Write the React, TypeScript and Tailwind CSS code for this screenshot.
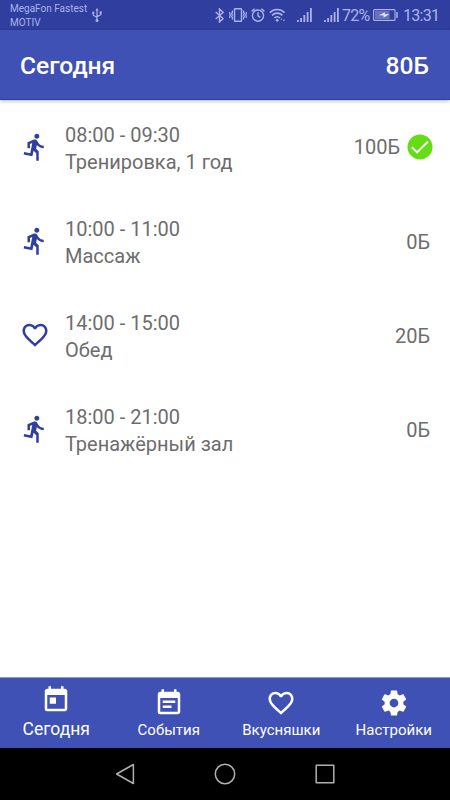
import React from 'react';
import {
  MdDirectionsRun,
  MdFavoriteBorder,
  MdToday,
  MdEventNote,
} from 'react-icons/md';

interface ScheduleItem {
  time: string;
  title: string;
  points: string;
  kind: 'sport' | 'health';
  done?: boolean;
}

const ITEMS: ScheduleItem[] = [
  { time: '08:00 - 09:30', title: 'Тренировка, 1 год', points: '100Б', kind: 'sport', done: true },
  { time: '10:00 - 11:00', title: 'Массаж', points: '0Б', kind: 'sport' },
  { time: '14:00 - 15:00', title: 'Обед', points: '20Б', kind: 'health' },
  { time: '18:00 - 21:00', title: 'Тренажёрный зал', points: '0Б', kind: 'sport' },
];

const GearIcon: React.FC<{ className?: string }> = ({ className }) => (
  <svg viewBox="0 0 24 24" className={className} fill="currentColor">
    <path d="M19.43 12.98c.04-.32.07-.64.07-.98s-.03-.66-.07-.98l2.11-1.65c.19-.15.24-.42.12-.64l-2-3.46c-.12-.22-.39-.3-.61-.22l-2.49 1c-.52-.4-1.08-.73-1.69-.98l-.38-2.65C14.46 2.18 14.25 2 14 2h-4c-.25 0-.46.18-.49.42l-.38 2.65c-.61.25-1.17.59-1.69.98l-2.49-1c-.23-.09-.49 0-.61.22l-2 3.46c-.13.22-.07.49.12.64l2.11 1.65c-.04.32-.07.65-.07.98s.03.66.07.98l-2.11 1.65c-.19.15-.24.42-.12.64l2 3.46c.12.22.39.3.61.22l2.49-1c.52.4 1.08.73 1.69.98l.38 2.65c.03.24.24.42.49.42h4c.25 0 .46-.18.49-.42l.38-2.65c.61-.25 1.17-.59 1.69-.98l2.49 1c.23.09.49 0 .61-.22l2-3.46c.12-.22.07-.49-.12-.64l-2.11-1.65zM12 15.5c-1.93 0-3.5-1.57-3.5-3.5s1.57-3.5 3.5-3.5 3.5 1.57 3.5 3.5-1.57 3.5-3.5 3.5z" />
  </svg>
);

const TABS = [
  { label: 'Сегодня', icon: MdToday, active: true },
  { label: 'События', icon: MdEventNote, active: false },
  { label: 'Вкусняшки', icon: MdFavoriteBorder, active: false },
  { label: 'Настройки', icon: GearIcon, active: false },
];

const SignalIcon: React.FC<{ className?: string }> = ({ className }) => (
  <svg viewBox="0 0 15 14" className={`w-[15px] h-3.5 shrink-0 ${className ?? ''}`} fill="currentColor">
    <path d="M0 12h1.8v2H0zM3.2 10H5v4H3.2zM6.4 7h1.8v7H6.4zM9.7 4h1.8v10H9.7zM13 0h1.8v14H13z" />
  </svg>
);

const StatusBar: React.FC = () => (
  <div className="h-[30px] shrink-0 bg-[#303f9f] text-[#aab3ea] flex items-center pl-2.5 pr-[11px]">
    <div className="text-[10px] leading-[14px] pt-[2px] w-[82px] whitespace-nowrap">
      <div>MegaFon Fastest</div>
      <div>MOTIV</div>
    </div>
    {/* usb */}
    <svg viewBox="0 0 10 14" className="w-2.5 h-3.5 shrink-0" fill="none" stroke="currentColor" strokeWidth="1.2">
      <path d="M5 2v10M1.3 5v2.2L5 9.6M8.7 4.5v2.2L5 8.6" />
      <path d="M5 0l1.6 2.6H3.4z" fill="currentColor" stroke="none" />
      <circle cx="5" cy="12.4" r="1.5" fill="currentColor" stroke="none" />
      <circle cx="1.3" cy="4.8" r="1.2" fill="currentColor" stroke="none" />
      <path d="M7.6 3.4h2.2v2.2H7.6z" fill="currentColor" stroke="none" />
    </svg>
    <div className="ml-auto flex items-center">
      {/* bluetooth */}
      <svg viewBox="0 0 9 15" className="w-[9px] h-[15px]" fill="none" stroke="currentColor" strokeWidth="1.4">
        <path d="M.7 4l7.4 6.6L4.5 14V1l3.6 3.4L.7 11" />
      </svg>
      {/* vibrate */}
      <svg viewBox="0 0 18 14" className="w-[18px] h-3.5 ml-[5px]" fill="none" stroke="currentColor" strokeWidth="1.4">
        <rect x="5.5" y=".8" width="7" height="12.4" rx=".5" />
        <path d="M3.4 2.4v2l-.8 1.2.8 1.4-.8 1.4.8 1.2v2M.8 4v2l.6 1-.6 1v2M14.6 2.4v2l.8 1.2-.8 1.4.8 1.4-.8 1.2v2M17.2 4v2l-.6 1 .6 1v2" strokeWidth="1.2" />
      </svg>
      {/* alarm */}
      <svg viewBox="0 0 14 14" className="w-3.5 h-3.5 ml-[4px]" fill="none" stroke="currentColor" strokeWidth="1.4">
        <circle cx="7" cy="7.6" r="5.6" />
        <path d="M7 4.3v3.5l2.3 1.6M.6 3.4L3.6.8M13.4 3.4L10.4.8" />
      </svg>
      {/* wifi */}
      <svg viewBox="0 0 17 14" className="w-[17px] h-3.5 ml-[4px]" fill="none" stroke="currentColor" strokeWidth="1.6">
        <path d="M.8 4.6c4.2-4.2 10.6-4.2 14.8 0M3 7.4c3-3 7.4-3 10.4 0M5.3 10c1.8-1.6 4-1.6 5.8 0" />
        <circle cx="8.2" cy="12.3" r="1.4" fill="currentColor" stroke="none" />
        <path d="M12.4 10.2l-1 1.6h2zM15 13.4l-1-1.6h2z" fill="currentColor" stroke="none" />
      </svg>
      <SignalIcon className="ml-[11px]" />
      <SignalIcon className="ml-[12px]" />
      <span className="text-[16px] leading-5 ml-[3px] w-[29px] pt-px tracking-[-0.8px] whitespace-nowrap">72%</span>
      {/* battery */}
      <svg viewBox="0 0 25 12" className="w-[25px] h-3 ml-[2px]" fill="none" stroke="currentColor">
        <rect x=".6" y=".6" width="21.4" height="10.8" rx="1" strokeWidth="1.1" />
        <path d="M2 2h14.5v8H2z" fill="currentColor" stroke="none" opacity=".45" />
        <path d="M6 6.3l6-3-.3 2L16.5 5l-6 3.8.2-2.2z" fill="#e2e6ff" stroke="none" />
        <path d="M24 3v6" strokeWidth="1.5" />
      </svg>
      <span className="text-[16px] leading-5 ml-[5px] w-[36px] pt-px tracking-[-0.7px] whitespace-nowrap">13:31</span>
    </div>
  </div>
);

const ScheduleRow: React.FC<{ item: ScheduleItem }> = ({ item }) => {
  const Icon = item.kind === 'sport' ? MdDirectionsRun : MdFavoriteBorder;
  return (
    <div className="h-[94px] flex items-center px-5 text-xl leading-[27px] text-[#6d6d6d]">
      <Icon className="w-[30px] h-[30px] shrink-0 text-[#303f9f]" />
      <div className="ml-[15px] flex-1 pt-[3px]">
        <div>{item.time}</div>
        <div>{item.title}</div>
      </div>
      <span className={item.done ? '' : 'pt-0.5'}>{item.points}</span>
      {item.done && (
        <svg viewBox="0 0 26 26" className="w-[26px] h-[26px] ml-[7px] -mr-[3px]">
          <circle cx="13" cy="13" r="12.5" fill="#64dd17" />
          <path d="M4.8 13.2l5.3 5.2L21 7.6" fill="none" stroke="#fff" strokeWidth="2.1" />
        </svg>
      )}
    </div>
  );
};

const App: React.FC = () => {
  return (
    <div className="w-full h-screen flex flex-col overflow-hidden bg-white font-['Roboto',sans-serif]">
      <StatusBar />
      <header className="h-[70px] shrink-0 bg-[#3f51b5] text-white border-b border-[#303f9f] shadow-[0_1px_4px_rgba(0,0,0,0.3)] flex items-center justify-between pl-5 pr-[21px] pt-[3px] text-[24.6px] font-medium">
        <h1>Сегодня</h1>
        <span>80Б</span>
      </header>

      <main className="flex-1">
        {ITEMS.map((item) => (
          <ScheduleRow key={item.time} item={item} />
        ))}
      </main>

      <nav className="h-[71px] shrink-0 bg-[#3f51b5] text-white border-t border-[#8c97d3] grid grid-cols-4">
        {TABS.map(({ label, icon: Icon, active }) => (
          <div key={label} className={`flex flex-col items-center ${active ? 'pt-[7px]' : 'pt-2.5'}`}>
            <Icon className="w-[30px] h-[30px]" />
            <span className={active ? 'text-[17.5px] leading-6 mt-0.5' : 'text-[15px] leading-5 mt-0.5'}>{label}</span>
          </div>
        ))}
      </nav>

      {/* system navigation */}
      <div className="h-[52px] shrink-0 bg-black flex items-center justify-center gap-[78px]">
        <svg viewBox="0 0 22 22" className="w-[22px] h-[22px]" fill="none" stroke="#b0b0b0" strokeWidth="1.5" strokeLinejoin="round">
          <path d="M19.4 1.5v19L2.6 11z" />
        </svg>
        <svg viewBox="0 0 22 22" className="w-[22px] h-[22px]" fill="none" stroke="#b0b0b0" strokeWidth="1.5">
          <circle cx="11" cy="11" r="9.7" />
        </svg>
        <svg viewBox="0 0 22 22" className="w-[22px] h-[22px]" fill="none" stroke="#b0b0b0" strokeWidth="1.5" strokeLinejoin="round">
          <rect x="2.2" y="2.2" width="17.6" height="17.6" />
        </svg>
      </div>
    </div>
  );
};

export default App;
